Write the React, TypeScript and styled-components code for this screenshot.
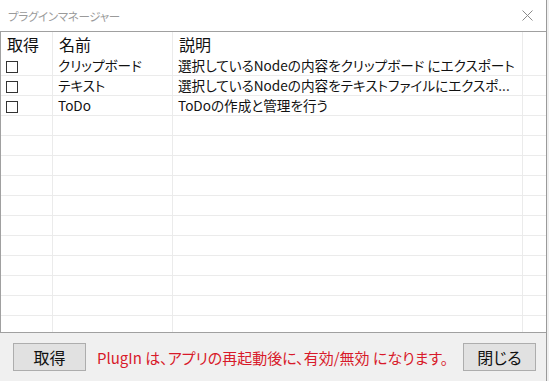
import React from "react";
import styled, { createGlobalStyle } from "styled-components";

const Global = createGlobalStyle`
  html, body { margin: 0; padding: 0; }
  body {
    width: 549px; height: 381px; overflow: hidden;
    background: #f0f0f0;
    font-family: "Noto Sans CJK JP", "Noto Sans", sans-serif;
    font-feature-settings: "palt";
  }
`;

const Window = styled.div`
  width: 546px;
  height: 381px;
  display: flex;
  flex-direction: column;
  background: #f0f0f0;
  border-right: 1px solid #9a9a9a;
`;

const TitleBar = styled.div`
  height: 31px;
  flex: none;
  background: #fff;
  display: flex;
  align-items: center;
  justify-content: space-between;
  padding: 0 13px 0 8px;
`;

const Title = styled.span`
  font-size: 11.5px;
  color: #9a9a9a;
  letter-spacing: -0.3px;
`;

const Grid = styled.div`
  height: 300px;
  flex: none;
  background: #fff;
  border: 1px solid #a0a0a0;
  border-right: none;
  overflow: hidden;
  display: grid;
  grid-template-columns: 52px 120px 350px 1fr;
  grid-auto-rows: 20px;
  grid-template-rows: 24px;
  align-content: start;
`;

const Cell = styled.div<{ $head?: boolean; $last?: boolean }>`
  border-right: ${(p) => (p.$last ? "none" : "1px solid #ebebeb")};
  border-bottom: ${(p) => (p.$head ? "none" : "1px solid #ebebeb")};
  font-size: ${(p) => (p.$head ? "16px" : "13.6px")};
  color: #111;
  display: flex;
  align-items: center;
  padding-left: ${(p) => (p.$head ? "6px" : "5px")};
  white-space: nowrap;
  overflow: hidden;
  line-height: 1;
`;

const Box = styled.span`
  width: 10px;
  height: 10px;
  border: 1px solid #333;
  margin-top: 2px;
`;

const Footer = styled.div`
  flex: 1;
  display: flex;
  align-items: center;
  padding: 0 10px 0 13px;
  gap: 11px;
`;

const Button = styled.button`
  width: 73px;
  height: 28px;
  background: #e1e1e1;
  border: 1px solid #adadad;
  font-family: inherit;
  font-feature-settings: "palt";
  font-size: 16px;
  color: #111;
  padding: 0;
`;

const Notice = styled.span`
  flex: 1;
  font-size: 15px;
  color: #d81a2a;
  white-space: nowrap;
`;

const rows = [
  ["クリップボード", "選択しているNodeの内容をクリップボード にエクスポート"],
  ["テキスト", "選択しているNodeの内容をテキストファイルにエクスポ..."],
  ["ToDo", "ToDoの作成と管理を行う"],
];

export default function App() {
  return (
    <>
      <Global />
      <Window>
        <TitleBar>
          <Title>プラグインマネージャー</Title>
          <svg width="11" height="11" viewBox="0 0 11 11">
            <path d="M0.5 0.5 L10.5 10.5 M10.5 0.5 L0.5 10.5" stroke="#8a8a8a" strokeWidth="1" fill="none" />
          </svg>
        </TitleBar>
        <Grid>
          <Cell $head>取得</Cell>
          <Cell $head>名前</Cell>
          <Cell $head>説明</Cell>
          <Cell $head $last />
          {rows.map(([name, desc]) => (
            <React.Fragment key={name}>
              <Cell>
                <Box />
              </Cell>
              <Cell>{name}</Cell>
              <Cell>{desc}</Cell>
              <Cell $last />
            </React.Fragment>
          ))}
          {Array.from({ length: 11 }).map((_, i) => (
            <React.Fragment key={i}>
              <Cell />
              <Cell />
              <Cell />
              <Cell $last />
            </React.Fragment>
          ))}
        </Grid>
        <Footer>
          <Button>取得</Button>
          <Notice>PlugIn は、アプリの再起動後に、有効/無効 になります。</Notice>
          <Button>閉じる</Button>
        </Footer>
      </Window>
    </>
  );
}
